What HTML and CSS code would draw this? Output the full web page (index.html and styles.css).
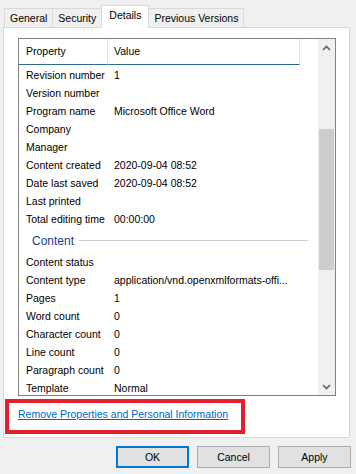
FILE: index.html
```html
<!DOCTYPE html>
<html lang="en">
<head>
    <meta charset="UTF-8">
    <meta name="viewport" content="width=device-width, initial-scale=1.0">
    <title>Properties - Details</title>
    <link rel="stylesheet" href="styles.css">
</head>
<body>
    <div class="dialog">
        <div class="tabs">
            <div class="tab">General</div>
            <div class="tab">Security</div>
            <div class="tab active">Details</div>
            <div class="tab">Previous Versions</div>
        </div>

        <div class="panel">
            <div class="listbox">
                <div class="list">
                    <div class="list-header">
                        <div class="col-head col-prop">Property</div>
                        <div class="col-head col-val">Value</div>
                    </div>
                    <div class="rows">
                        <div class="row"><span class="prop">Revision number</span><span class="val">1</span></div>
                        <div class="row"><span class="prop">Version number</span><span class="val"></span></div>
                        <div class="row"><span class="prop">Program name</span><span class="val">Microsoft Office Word</span></div>
                        <div class="row"><span class="prop">Company</span><span class="val"></span></div>
                        <div class="row"><span class="prop">Manager</span><span class="val"></span></div>
                        <div class="row"><span class="prop">Content created</span><span class="val">2020-09-04 08:52</span></div>
                        <div class="row"><span class="prop">Date last saved</span><span class="val">2020-09-04 08:52</span></div>
                        <div class="row"><span class="prop">Last printed</span><span class="val"></span></div>
                        <div class="row"><span class="prop">Total editing time</span><span class="val">00:00:00</span></div>

                        <div class="group"><span class="group-title">Content</span><span class="group-line"></span></div>

                        <div class="row"><span class="prop">Content status</span><span class="val"></span></div>
                        <div class="row"><span class="prop">Content type</span><span class="val">application/vnd.openxmlformats-offi...</span></div>
                        <div class="row"><span class="prop">Pages</span><span class="val">1</span></div>
                        <div class="row"><span class="prop">Word count</span><span class="val">0</span></div>
                        <div class="row"><span class="prop">Character count</span><span class="val">0</span></div>
                        <div class="row"><span class="prop">Line count</span><span class="val">0</span></div>
                        <div class="row"><span class="prop">Paragraph count</span><span class="val">0</span></div>
                        <div class="row"><span class="prop">Template</span><span class="val">Normal</span></div>
                    </div>
                </div>

                <div class="scrollbar">
                    <div class="sb-btn">
                        <svg width="9" height="6" viewBox="0 0 9 6"><path d="M1 5 L4.5 1.5 L8 5" fill="none" stroke="#606060" stroke-width="1.6"/></svg>
                    </div>
                    <div class="sb-track"><div class="sb-thumb"></div></div>
                    <div class="sb-btn">
                        <svg width="9" height="6" viewBox="0 0 9 6"><path d="M1 1 L4.5 4.5 L8 1" fill="none" stroke="#606060" stroke-width="1.6"/></svg>
                    </div>
                </div>
            </div>

            <div class="link-area">
                <a href="#" class="link">Remove Properties and Personal Information</a>
            </div>

            <!-- red annotation box drawn over the link -->
            <div class="highlight"></div>
        </div>

        <div class="buttons">
            <button class="btn default">OK</button>
            <button class="btn">Cancel</button>
            <button class="btn">Apply</button>
        </div>
    </div>
</body>
</html>
```

FILE: styles.css
```css
* {
    margin: 0;
    padding: 0;
    box-sizing: border-box;
}

body {
    font-family: 'Liberation Sans', Arial, sans-serif;
    font-size: 10.5px;
    color: #000;
    background: #f0f0f0;
    width: 356px;
    height: 474px;
    overflow: hidden;
}

.dialog {
    padding: 0 6px 0 3px;
}

/* tabs */
.tabs {
    display: flex;
    align-items: flex-end;
    height: 27px;
    padding-left: 1px;
}

.tab {
    height: 19px;
    line-height: 18px;
    padding: 0 5px;
    border: 1px solid #d9d9d9;
    border-bottom: none;
    border-right: none;
    background: #f0f0f0;
    white-space: nowrap;
}

.tab:last-child {
    border-right: 1px solid #d9d9d9;
}

.tab.active {
    height: 23px;
    line-height: 19px;
    padding: 0 7px;
    margin-bottom: -1px;
    background: #fff;
    border-right: 1px solid #d9d9d9;
    position: relative;
    z-index: 1;
}

.tab.active + .tab {
    border-left: none;
}

/* panel */
.panel {
    position: relative;
    height: 411px;
    background: #fff;
    border: 1px solid #d9d9d9;
    padding: 10px 13px 0 14px;
}

.listbox {
    display: flex;
    height: 358px;
    border: 1px solid #828282;
    background: #fff;
}

.list {
    flex: 1;
    overflow: hidden;
}

.list-header {
    display: flex;
    height: 26px;
}

.col-head {
    height: 26px;
    line-height: 25px;
    border-right: 1px solid #e5e5e5;
    border-bottom: 1px solid #2f6a8e;
    padding-left: 7px;
}

.col-prop {
    width: 89px;
}

.col-val {
    width: 192px;
    padding-left: 6px;
}

.rows {
    padding-top: 1px;
}

.row {
    display: flex;
    height: 18px;
    line-height: 18px;
    white-space: nowrap;
}

.prop {
    width: 88px;
    padding-left: 7px;
    overflow: hidden;
}

.val {
    flex: 1;
    padding-left: 7px;
    overflow: hidden;
}

.group {
    display: flex;
    align-items: center;
    height: 25px;
    padding: 0 10px 0 13px;
}

.group-title {
    font-size: 12px;
    color: #1e3a8c;
}

.group-line {
    flex: 1;
    height: 1px;
    margin-left: 5px;
    background: #c5cfdb;
}

/* scrollbar */
.scrollbar {
    width: 17px;
    display: flex;
    flex-direction: column;
    background: #f0f0f0;
}

.sb-btn {
    height: 17px;
    display: flex;
    align-items: center;
    justify-content: center;
}

.sb-track {
    flex: 1;
    padding-top: 73px;
}

.sb-thumb {
    height: 141px;
    margin: 0 1px;
    background: #cdcdcd;
}

/* link */
.link-area {
    margin-top: 11px;
    line-height: 14px;
}

.link {
    color: #0066cc;
    text-decoration: underline;
}

.highlight {
    position: absolute;
    left: 1px;
    top: 371px;
    width: 240px;
    height: 35px;
    border: 4px solid #e31e2d;
}

/* buttons */
.buttons {
    display: flex;
    justify-content: flex-end;
    gap: 8px;
    margin-top: 8px;
    margin-right: -1px;
}

.btn {
    width: 73px;
    height: 22px;
    font-family: inherit;
    font-size: 10.5px;
    color: #000;
    background: #e1e1e1;
    border: 1px solid #adadad;
}

.btn.default {
    border: 2px solid #0078d7;
}
```
